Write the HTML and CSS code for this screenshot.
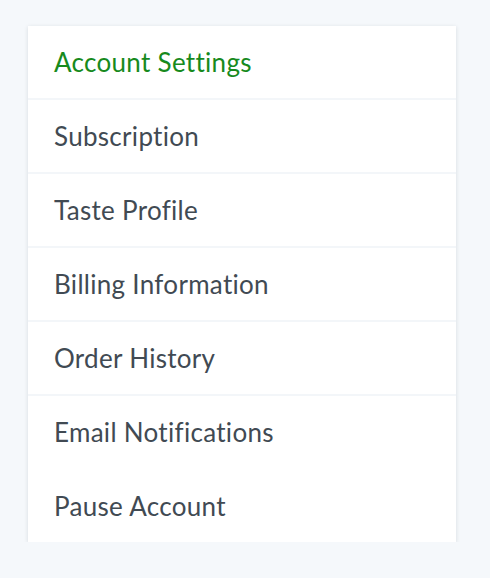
FILE: index.html
```html
<!DOCTYPE html>
<html>
<head>
<meta charset="utf-8">
<link rel="stylesheet" href="styles.css">
</head>
<body>
<nav class="menu">
  <a class="item active">Account Settings</a>
  <a class="item">Subscription</a>
  <a class="item">Taste Profile</a>
  <a class="item">Billing Information</a>
  <a class="item">Order History</a>
  <a class="item plain">Email Notifications</a>
  <a class="item plain">Pause Account</a>
</nav>
</body>
</html>
```
FILE: styles.css
```css
html, body {
  margin: 0;
  padding: 0;
  background: #f5f8fb;
}
body {
  padding: 26px 34px 0 28px;
  font-family: "Lato", "Noto Sans", sans-serif;
}
.menu {
  display: flex;
  flex-direction: column;
  background: #fff;
  width: 428px;
  box-shadow: 0 1px 4px rgba(30, 40, 60, 0.14);
}
.item {
  display: flex;
  align-items: center;
  height: 72px;
  padding: 0 26px;
  font-size: 26px;
  line-height: 1;
  letter-spacing: 0.3px;
  font-variant-ligatures: none;
  color: #414a53;
  border-bottom: 2px solid #f3f6f9;
}
.item.plain {
  border-bottom-color: #fff;
}
.item:last-child {
  border-bottom: none;
}
.item.active {
  color: #178a1d;
}
```
